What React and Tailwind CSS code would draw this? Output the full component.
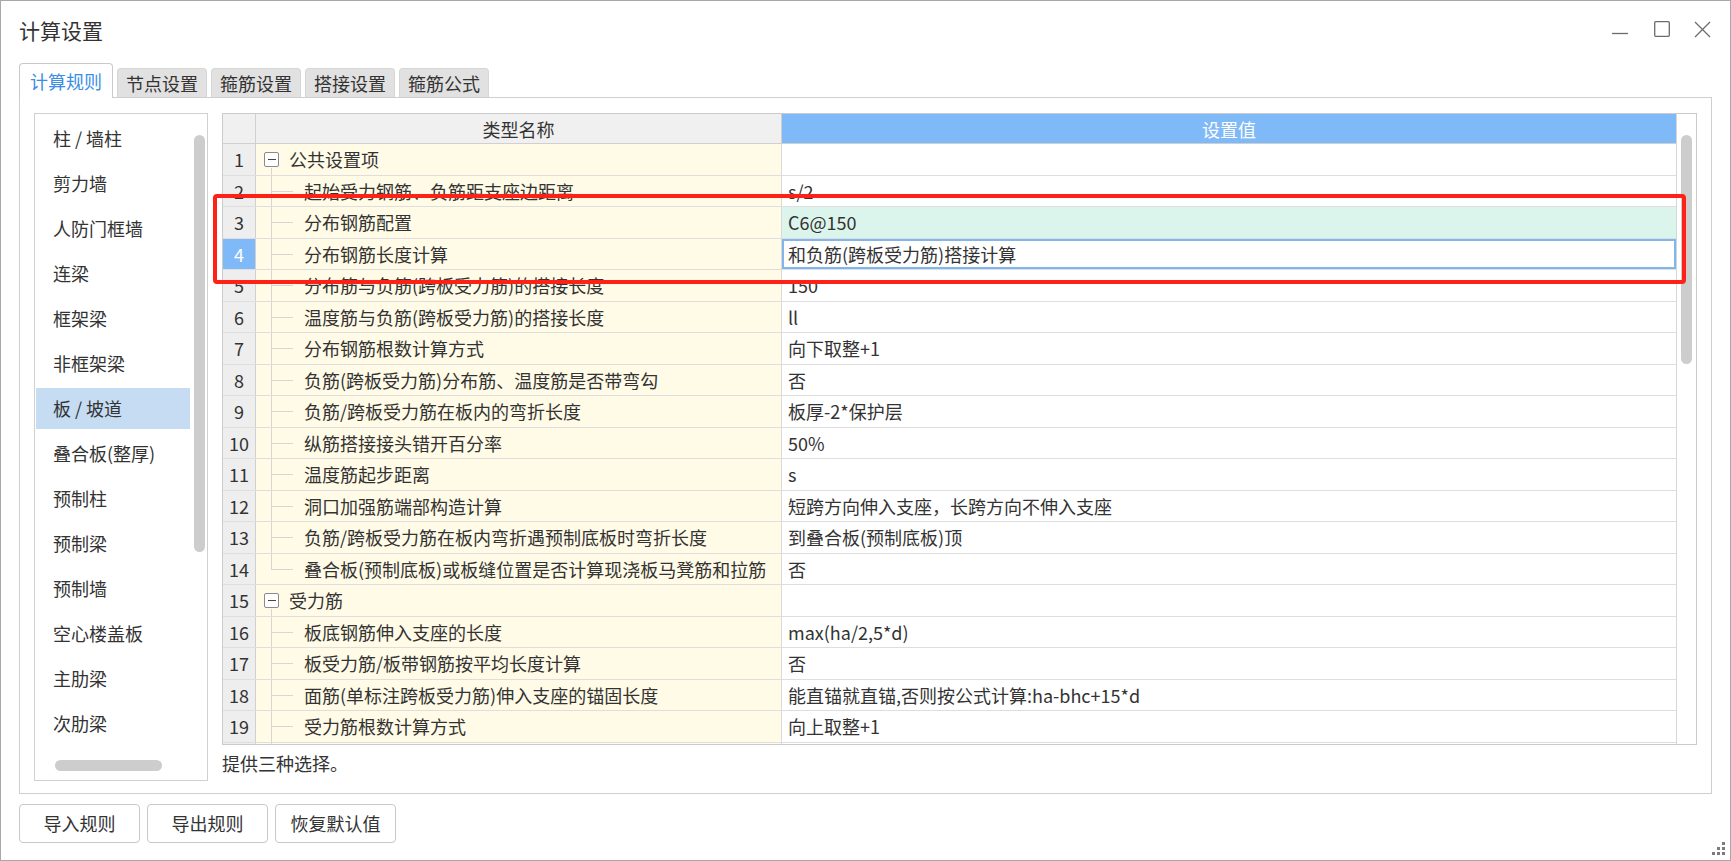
import React from "react";

const rows = [
  { n: 1, g: true, name: "公共设置项", v: "" },
  { n: 2, name: "起始受力钢筋、负筋距支座边距离", v: "s/2" },
  { n: 3, name: "分布钢筋配置", v: "C6@150", green: true },
  { n: 4, name: "分布钢筋长度计算", v: "和负筋(跨板受力筋)搭接计算", sel: true },
  { n: 5, name: "分布筋与负筋(跨板受力筋)的搭接长度", v: "150" },
  { n: 6, name: "温度筋与负筋(跨板受力筋)的搭接长度", v: "ll" },
  { n: 7, name: "分布钢筋根数计算方式", v: "向下取整+1" },
  { n: 8, name: "负筋(跨板受力筋)分布筋、温度筋是否带弯勾", v: "否" },
  { n: 9, name: "负筋/跨板受力筋在板内的弯折长度", v: "板厚-2*保护层" },
  { n: 10, name: "纵筋搭接接头错开百分率", v: "50%" },
  { n: 11, name: "温度筋起步距离", v: "s" },
  { n: 12, name: "洞口加强筋端部构造计算", v: "短跨方向伸入支座，长跨方向不伸入支座" },
  { n: 13, name: "负筋/跨板受力筋在板内弯折遇预制底板时弯折长度", v: "到叠合板(预制底板)顶" },
  { n: 14, name: "叠合板(预制底板)或板缝位置是否计算现浇板马凳筋和拉筋", v: "否", last: true },
  { n: 15, g: true, name: "受力筋", v: "" },
  { n: 16, name: "板底钢筋伸入支座的长度", v: "max(ha/2,5*d)" },
  { n: 17, name: "板受力筋/板带钢筋按平均长度计算", v: "否" },
  { n: 18, name: "面筋(单标注跨板受力筋)伸入支座的锚固长度", v: "能直锚就直锚,否则按公式计算:ha-bhc+15*d" },
  { n: 19, name: "受力筋根数计算方式", v: "向上取整+1" },
  { n: "", name: "", v: "", key: 20 },
];

const listItems = [
  "柱 / 墙柱",
  "剪力墙",
  "人防门框墙",
  "连梁",
  "框架梁",
  "非框架梁",
  "板 / 坡道",
  "叠合板(整厚)",
  "预制柱",
  "预制梁",
  "预制墙",
  "空心楼盖板",
  "主肋梁",
  "次肋梁",
];

const tabs = ["计算规则", "节点设置", "箍筋设置", "搭接设置", "箍筋公式"];

function NameCell({ r }) {
  if (r.g) {
    return (
      <div className="relative w-[526px] shrink-0 h-full flex items-center border-r border-[#d9d9d9] bg-[#fffbe7] pl-[8px]">
        <div className="w-[15px] h-[15px] border border-[#8a8a8a] rounded-[2px] flex items-center justify-center bg-white">
          <div className="w-[8px] h-px bg-[#444]" />
        </div>
        <span className="ml-[10px]">{r.name}</span>
        <div className="absolute left-[15px] top-[24px] bottom-0 w-px bg-[#d6d6d6]" />
      </div>
    );
  }
  return (
    <div className="w-[526px] shrink-0 h-full flex items-stretch border-r border-[#d9d9d9] bg-[#fffbe7]">
      <div className="w-[15px] shrink-0" />
      <div className="relative w-[33px] shrink-0">
        <div className={"absolute left-0 top-0 w-px bg-[#d6d6d6] " + (r.last ? "h-1/2" : "h-full")} />
        <div className="absolute left-0 top-1/2 w-[22px] h-px bg-[#d6d6d6]" />
      </div>
      <div className="flex items-center whitespace-nowrap">{r.name}</div>
    </div>
  );
}

function Row({ r }) {
  return (
    <div className="flex shrink-0 h-[31.5px] border-b border-[#dedede] text-[18px] text-[#333] leading-none">
      <div
        className={
          "w-[33px] shrink-0 h-full flex items-center justify-center border-r border-[#d0d0d0] " +
          (r.sel ? "bg-[#80b9f7] text-white" : "bg-[#eeeeee]")
        }
      >
        {r.n}
      </div>
      <NameCell r={r} />
      <div className={"flex-1 h-full " + (r.green ? "bg-[#dcf5ec]" : "bg-white")}>
        {r.sel ? (
          <div className="h-full flex items-center border-2 border-[#7fb6ee] pl-[4px] whitespace-nowrap">{r.v}</div>
        ) : (
          <div className="h-full flex items-center pl-[6px] whitespace-nowrap">{r.v}</div>
        )}
      </div>
    </div>
  );
}

export default function App() {
  return (
    <div className="relative w-[1731px] h-[861px] bg-white border border-[#a8a8a8] flex flex-col font-['Noto_Sans_CJK_SC','Noto_Sans',sans-serif] text-[#333] overflow-hidden">
      {/* Title bar */}
      <div className="h-[62px] shrink-0 flex justify-between pl-[18px] pr-[19px]">
        <div className="pt-[14px] text-[21px] leading-[30px] text-[#333]">计算设置</div>
        <div className="flex items-start pt-[20px]">
          <svg width="16" height="17" viewBox="0 0 16 17" className="block">
            <line x1="0" y1="12.5" x2="16" y2="12.5" stroke="#6b6b6b" strokeWidth="1.3" />
          </svg>
          <svg width="16" height="17" viewBox="0 0 16 17" className="block ml-[26px]">
            <rect x="0.7" y="0.7" width="14.6" height="14.6" fill="none" stroke="#6b6b6b" strokeWidth="1.3" rx="1" />
          </svg>
          <svg width="17" height="17" viewBox="0 0 17 17" className="block ml-[24px]">
            <line x1="1" y1="1" x2="16" y2="16" stroke="#6b6b6b" strokeWidth="1.3" />
            <line x1="16" y1="1" x2="1" y2="16" stroke="#6b6b6b" strokeWidth="1.3" />
          </svg>
        </div>
      </div>

      {/* Tabs */}
      <div className="h-[34px] shrink-0 flex items-end gap-[4px] pl-[18px] relative z-10">
        {tabs.map((t, i) =>
          i === 0 ? (
            <div
              key={t}
              className="h-[35px] -mb-px px-[10px] flex items-center bg-white border border-b-0 border-[#c9c9c9] rounded-t-[4px] text-[18px] text-[#3a8ee6]"
            >
              {t}
            </div>
          ) : (
            <div
              key={t}
              className="h-[29px] px-[8px] flex items-center bg-[#e1e1e1] border border-b-0 border-[#d6d6d6] rounded-t-[4px] text-[18px] text-[#333]"
            >
              {t}
            </div>
          )
        )}
      </div>

      {/* Panel */}
      <div className="mx-[18px] h-[697px] shrink-0 border border-[#cfcfcf] flex pt-[15px] px-[14px] pb-[12px] gap-[14px]">
        {/* Left list */}
        <div className="relative w-[174px] h-[668px] shrink-0 border border-[#d0d0d0] overflow-hidden">
          <div className="flex flex-col pt-[2px]">
            {listItems.map((it) => (
              <div key={it} className="h-[45px] shrink-0 flex items-center">
                <div
                  className={
                    "ml-px w-[154px] h-[41px] flex items-center pl-[17px] text-[18px] whitespace-nowrap " +
                    (it === "板 / 坡道" ? "bg-[#c5dcf3]" : "")
                  }
                >
                  {it}
                </div>
              </div>
            ))}
          </div>
          <div className="absolute right-[2px] top-[21px] w-[11px] h-[417px] rounded-full bg-[#cdcdcd]" />
          <div className="absolute left-[20px] bottom-[9px] w-[107px] h-[11px] rounded-full bg-[#cdcdcd]" />
        </div>

        {/* Right column */}
        <div className="flex-1 flex flex-col">
          <div className="relative h-[632px] shrink-0 border border-[#cbcbcb] flex">
            <div className="flex-1 flex flex-col overflow-hidden">
              <div className="flex h-[30px] shrink-0 border-b border-[#d0d0d0] text-[18px] leading-none">
                <div className="w-[33px] shrink-0 bg-[#f0f0f0] border-r border-[#d0d0d0]" />
                <div className="w-[526px] shrink-0 bg-[#f0f0f0] border-r border-[#d0d0d0] flex items-center justify-center text-[#333]">
                  类型名称
                </div>
                <div className="flex-1 bg-[#80b9f7] flex items-center justify-center text-white">设置值</div>
              </div>
              {rows.map((r, i) => (
                <Row key={i} r={r} />
              ))}
            </div>
            <div className="w-[20px] shrink-0 border-l border-[#d6d6d6] bg-white pt-[21px] pl-[4px]">
              <div className="w-[11px] h-[229px] rounded-full bg-[#cdcdcd]" />
            </div>
            {/* Red highlight */}
            <div className="absolute left-[-10px] top-[80px] w-[1473px] h-[90px] border-[4px] border-[#ff2016] rounded-[4px] pointer-events-none z-20" />
          </div>
          <div className="flex-1 flex items-center text-[18px] leading-none">提供三种选择。</div>
        </div>
      </div>

      {/* Buttons */}
      <div className="mt-[10px] pl-[18px] flex gap-[7px]">
        {["导入规则", "导出规则", "恢复默认值"].map((b) => (
          <div
            key={b}
            className="w-[121px] h-[39px] flex items-center justify-center border border-[#c8c8c8] rounded-[4px] bg-white text-[18px] text-[#333]"
          >
            {b}
          </div>
        ))}
      </div>

      {/* Resize grip */}
      <svg width="14" height="14" viewBox="0 0 14 14" className="absolute right-[4px] bottom-[4px]">
        {[
          [10, 0],
          [5, 5],
          [10, 5],
          [0, 10],
          [5, 10],
          [10, 10],
        ].map(([x, y]) => (
          <rect key={x + "-" + y} x={x} y={y} width="3" height="3" fill="#7b7b7b" />
        ))}
      </svg>
    </div>
  );
}
